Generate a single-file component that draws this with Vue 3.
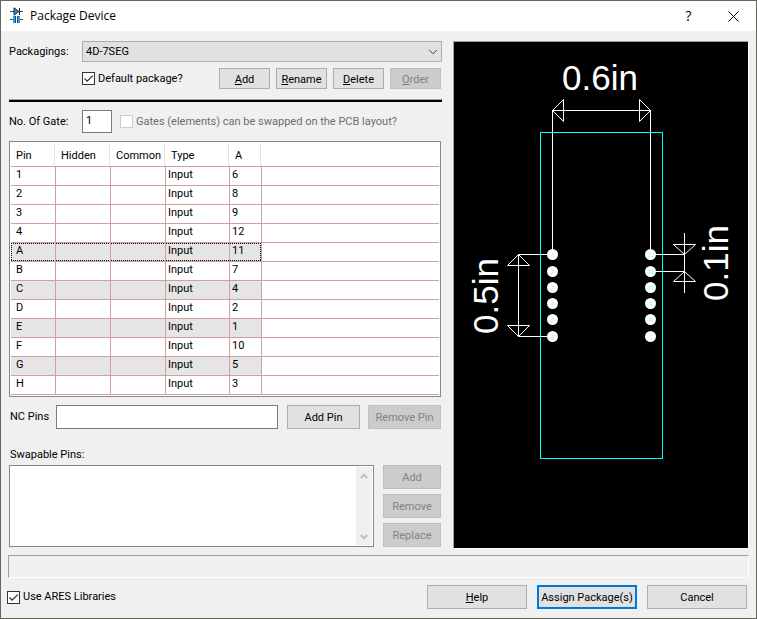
<script setup>
import { ref } from 'vue'

const packaging = ref('4D-7SEG')
const defaultPackage = ref(true)
const gateCount = ref('1')
const useAres = ref(true)
const ncPins = ref('')

const pins = [
  { name: '1', type: 'Input', a: '6' },
  { name: '2', type: 'Input', a: '8' },
  { name: '3', type: 'Input', a: '9' },
  { name: '4', type: 'Input', a: '12' },
  { name: 'A', type: 'Input', a: '11', shaded: true, focused: true },
  { name: 'B', type: 'Input', a: '7' },
  { name: 'C', type: 'Input', a: '4', shaded: true },
  { name: 'D', type: 'Input', a: '2' },
  { name: 'E', type: 'Input', a: '1', shaded: true },
  { name: 'F', type: 'Input', a: '10' },
  { name: 'G', type: 'Input', a: '5', shaded: true },
  { name: 'H', type: 'Input', a: '3' }
]

const padRows = [212.5, 229.5, 245.5, 261.5, 277.5, 294.5]
const pads = [
  ...padRows.map((y, i) => ({ x: 98.5, y, label: String(i + 1) })),
  ...padRows.map((y, i) => ({ x: 196.5, y, label: String(12 - i) }))
]
</script>

<template>
  <main class="dialog">
    <header class="titlebar">
      <svg class="app-icon" width="16" height="18" viewBox="0 0 16 18" aria-hidden="true">
        <path d="M1 4.5H14M1 12.5H4M11 12.5H14" stroke="#4a4a4a" fill="none" />
        <path d="M5 .8V8.2L10 4.5Z" fill="#1f8fe0" stroke="#12304a" />
        <path d="M10.5 1V8" stroke="#12304a" />
        <path d="M4 9h2v7H4zM9 9h2v7H9z" fill="#2f9be6" />
        <path d="M6.5 9V16M8.5 9V16" stroke="#174a75" />
      </svg>
      <h1>Package Device</h1>
      <button class="caption" aria-label="Help">?</button>
      <button class="caption" aria-label="Close">
        <svg width="11" height="11" viewBox="0 0 11 11"><path d="M.5 .5l10 10M10.5 .5l-10 10" stroke="#000" fill="none" /></svg>
      </button>
    </header>

    <div class="body">
      <div class="settings">
        <div class="row">
          <label class="lead" for="packagings">Packagings:</label>
          <div class="combo">
            <select id="packagings" v-model="packaging"><option>4D-7SEG</option></select>
            <svg width="10" height="6" viewBox="0 0 10 6" aria-hidden="true"><path d="M1 .8L5 4.8L9 .8" stroke="#444" fill="none" /></svg>
          </div>
        </div>

        <div class="row actions">
          <label class="check"><input v-model="defaultPackage" type="checkbox" />Default package?</label>
          <div class="button-set">
            <button><u>A</u>dd</button>
            <button><u>R</u>ename</button>
            <button><u>D</u>elete</button>
            <button disabled><u>O</u>rder</button>
          </div>
        </div>

        <hr />

        <div class="row gates">
          <label class="lead" for="gates">No. Of Gate:</label>
          <input id="gates" v-model="gateCount" class="field" type="text" />
          <label class="check off"><input type="checkbox" disabled />Gates (elements) can be swapped on the PCB layout?</label>
        </div>

        <div class="pins">
          <table>
            <colgroup>
              <col class="c-pin" /><col class="c-flag" /><col class="c-flag" /><col class="c-type" /><col class="c-gate" /><col />
            </colgroup>
            <thead>
              <tr><th>Pin</th><th>Hidden</th><th>Common</th><th>Type</th><th>A</th><th></th></tr>
            </thead>
            <tbody>
              <tr v-for="pin in pins" :key="pin.name" :class="{ shaded: pin.shaded, focused: pin.focused }">
                <td>{{ pin.name }}</td><td></td><td></td><td>{{ pin.type }}</td><td>{{ pin.a }}</td><td></td>
              </tr>
            </tbody>
          </table>
        </div>

        <div class="row nc">
          <label for="nc">NC Pins</label>
          <input id="nc" v-model="ncPins" class="field" type="text" />
          <div class="nc-buttons">
            <button>Add Pin</button>
            <button disabled>Remove Pin</button>
          </div>
        </div>

        <label class="swap-label" for="swapable">Swapable Pins:</label>
        <div class="swap">
          <div class="list">
            <select id="swapable" multiple></select>
            <div class="scroll" aria-hidden="true">
              <svg width="8" height="6" viewBox="0 0 8 6"><path d="M.7 5L4 1.7L7.3 5" stroke="#bfbfbf" stroke-width="2" fill="none" /></svg>
              <svg width="8" height="6" viewBox="0 0 8 6"><path d="M.7 1L4 4.3L7.3 1" stroke="#bfbfbf" stroke-width="2" fill="none" /></svg>
            </div>
          </div>
          <div class="stack">
            <button disabled>Add</button>
            <button disabled>Remove</button>
            <button disabled>Replace</button>
          </div>
        </div>
      </div>

      <div class="preview">
        <svg viewBox="0 0 294 506" role="img" aria-label="Package footprint">
          <rect x="86.5" y="90.5" width="122" height="326" fill="none" stroke="#00ffff" />
          <g fill="none" stroke="#fff">
            <path d="M98.5 212V68.5H196.5V212" />
            <path d="M98.5 68.5L109.5 57.5V79.5Z M196.5 68.5L185.5 57.5V79.5Z" />
            <path d="M98 212.5H64.5V294.5H98" />
            <path d="M64.5 212.5L53.5 223.5H75.5Z M64.5 294.5L53.5 283.5H75.5Z" />
            <path d="M196 212.5H230.5M196 229.5H230.5M230.5 191V251" />
            <path d="M230.5 212.5L219.5 202.5H241.5Z M230.5 229.5L219.5 239.5H241.5Z" />
          </g>
          <g v-for="pad in pads" :key="pad.label">
            <circle :cx="pad.x" :cy="pad.y" r="5.5" fill="#fff" />
            <text class="pad" :x="pad.x" :y="pad.y + 2">{{ pad.label }}</text>
          </g>
          <text class="dim" x="108" y="48">0.6in</text>
          <text class="dim" transform="translate(44 292) rotate(-90)">0.5in</text>
          <text class="dim" transform="translate(274 259) rotate(-90)">0.1in</text>
        </svg>
      </div>
    </div>

    <div class="status" role="status"></div>

    <footer>
      <label class="check"><input v-model="useAres" type="checkbox" />Use ARES Libraries</label>
      <button><u>H</u>elp</button>
      <button class="primary">Assign Package(s)</button>
      <button>Cancel</button>
    </footer>
  </main>
</template>

<style>
body {
  margin: 0;
}
</style>

<style scoped>
* {
  box-sizing: border-box;
}
.dialog {
  min-height: 100vh;
  border: 1px solid #66665f;
  background: #f0f0f0;
  color: #000;
  font: 11px/14px Roboto, "Liberation Sans", sans-serif;
}
.titlebar {
  display: flex;
  align-items: center;
  height: 30px;
  padding-left: 8px;
  background: #fff;
}
.app-icon {
  margin-right: 5px;
}
h1 {
  flex: 1;
  margin: 0;
  font: 12px/16px "Open Sans", sans-serif;
}
.titlebar .caption {
  display: flex;
  align-items: center;
  justify-content: center;
  width: 45px;
  height: 30px;
  padding: 0;
  border: 0;
  background: none;
  font: 14px/16px "Open Sans", sans-serif;
}
.body {
  display: grid;
  grid-template-columns: 433fr 296fr;
  column-gap: 11px;
  padding: 10px 7px 0 8px;
}
.row {
  display: flex;
  align-items: center;
}
.lead {
  width: 73px;
  flex: none;
}
.combo {
  position: relative;
  flex: 1;
}
.combo select {
  display: block;
  width: 100%;
  height: 21px;
  padding: 1px 3px 0;
  border: 1px solid #adadad;
  border-radius: 0;
  background: #e1e1e1;
  color: #000;
  font: inherit;
  appearance: none;
}
.combo svg {
  position: absolute;
  right: 4px;
  top: 8px;
  pointer-events: none;
}
button {
  height: 24px;
  padding: 2px 0 0;
  border: 1px solid #adadad;
  border-radius: 0;
  background: #e1e1e1;
  color: #000;
  font: inherit;
}
button:disabled {
  border-color: #bfbfbf;
  background: #ccc;
  color: #838383;
}
.actions {
  justify-content: space-between;
  margin-top: 6px;
  padding: 0 1px 0 73px;
}
.button-set {
  display: flex;
  gap: 6px;
}
.button-set button {
  width: 51px;
  height: 21px;
}
.check {
  display: flex;
  align-items: center;
  gap: 3px;
  white-space: nowrap;
}
.check input {
  flex: none;
  width: 13px;
  height: 13px;
  margin: 0;
  border: 1px solid #333;
  background: #fff;
  appearance: none;
}
.check input:checked {
  background: #fff url("data:image/svg+xml,%3Csvg xmlns='http://www.w3.org/2000/svg' viewBox='0 0 11 11'%3E%3Cpath d='M1.5 5.5L4.2 8.2L9.8 2.6' fill='none' stroke='%23333' stroke-width='1.3'/%3E%3C/svg%3E");
}
.off {
  margin-left: 8px;
  color: #6d6d6d;
}
.off input {
  border-color: #ccc;
}
hr {
  height: 3px;
  margin: 10px 0 8px;
  border: 0;
  border-top: 1px solid #a0a0a0;
  background: #000;
}
.field {
  height: 24px;
  padding: 0 3px 3px;
  border: 1px solid #7a7a7a;
  border-radius: 0;
  background: #fff;
  font: inherit;
}
.gates .field {
  width: 30px;
  height: 23px;
}
.pins {
  margin: 8px 1px 8px 0;
  padding: 1px;
  border: 1px solid #828790;
  background: #fff;
}
table {
  width: 100%;
  border-spacing: 0;
  table-layout: fixed;
}
.c-pin {
  width: 45px;
}
.c-flag {
  width: 55px;
}
.c-type {
  width: 64px;
}
.c-gate {
  width: 32px;
}
th {
  height: 24px;
  padding: 2px 5px 0;
  border-bottom: 1px solid #d0a0a0;
  background: linear-gradient(#e5e5e5, #e5e5e5) no-repeat right 1px top 0 / 1px 100%;
  font-weight: 400;
  text-align: left;
}
th:last-child {
  background: none;
}
td {
  height: 19px;
  padding: 0 2px 2px;
  border-right: 1px solid #d0a0a0;
  border-bottom: 1px solid #d0a0a0;
}
td:first-child {
  padding-left: 5px;
}
td:last-child {
  border-right: 0;
}
.shaded td:not(:last-child) {
  background-color: #e5e5e5;
}
.focused td:not(:last-child) {
  background-image:
    repeating-linear-gradient(90deg, #000 0 1px, transparent 1px 2px),
    repeating-linear-gradient(90deg, #000 0 1px, transparent 1px 2px),
    repeating-linear-gradient(#000 0 1px, transparent 1px 2px);
  background-position: left top, left bottom, left top;
  background-repeat: no-repeat;
  background-size: 100% 1px, 100% 1px, 0 0;
}
.focused td:first-child {
  background-size: 100% 1px, 100% 1px, 1px 100%;
}
.focused td:nth-child(5) {
  background-position: left top, left bottom, right top;
  background-size: 100% 1px, 100% 1px, 1px 100%;
}
.nc {
  padding: 0 1px;
}
.nc label {
  flex: none;
  width: 46px;
}
.nc .field {
  flex: 1;
  min-width: 0;
}
.nc-buttons {
  display: flex;
  gap: 8px;
  margin-left: 9px;
}
.nc button {
  width: 73px;
}
.swap-label {
  display: block;
  margin: 19px 0 3px 1px;
}
.swap {
  display: flex;
  gap: 9px;
  padding-right: 1px;
}
.list {
  display: flex;
  flex: 1;
  padding: 1px;
  border: 1px solid #828790;
  background: #fff;
}
.list select {
  flex: 1;
  height: 78px;
  padding: 0;
  border: 0;
  border-radius: 0;
  outline: 0;
  background: #fff;
  scrollbar-width: none;
}
.scroll {
  display: flex;
  flex-direction: column;
  align-items: center;
  justify-content: space-between;
  width: 16px;
  padding: 6px 0 5px;
  background: #f0f0f0;
}
.stack {
  display: flex;
  flex-direction: column;
  gap: 5px;
  width: 58px;
}
.preview {
  border: 1px solid;
  border-color: #a0a0a0 #fff #fff #a0a0a0;
  background: #000;
}
.preview svg {
  display: block;
  width: 100%;
}
.dim {
  fill: #fff;
  font: 35px "Liberation Sans", sans-serif;
}
.pad {
  fill: #8ff;
  font: 6px "Liberation Sans", sans-serif;
  text-anchor: middle;
}
.status {
  height: 23px;
  margin: 6px 7px 0;
  border: 1px solid;
  border-color: #a0a0a0 #fff #fff #a0a0a0;
}
footer {
  display: flex;
  align-items: center;
  gap: 10px;
  padding: 7px 9px 9px 6px;
}
footer .check {
  flex: 1;
}
footer button {
  width: 100px;
}
footer .primary {
  border: 2px solid #0078d7;
}
</style>
